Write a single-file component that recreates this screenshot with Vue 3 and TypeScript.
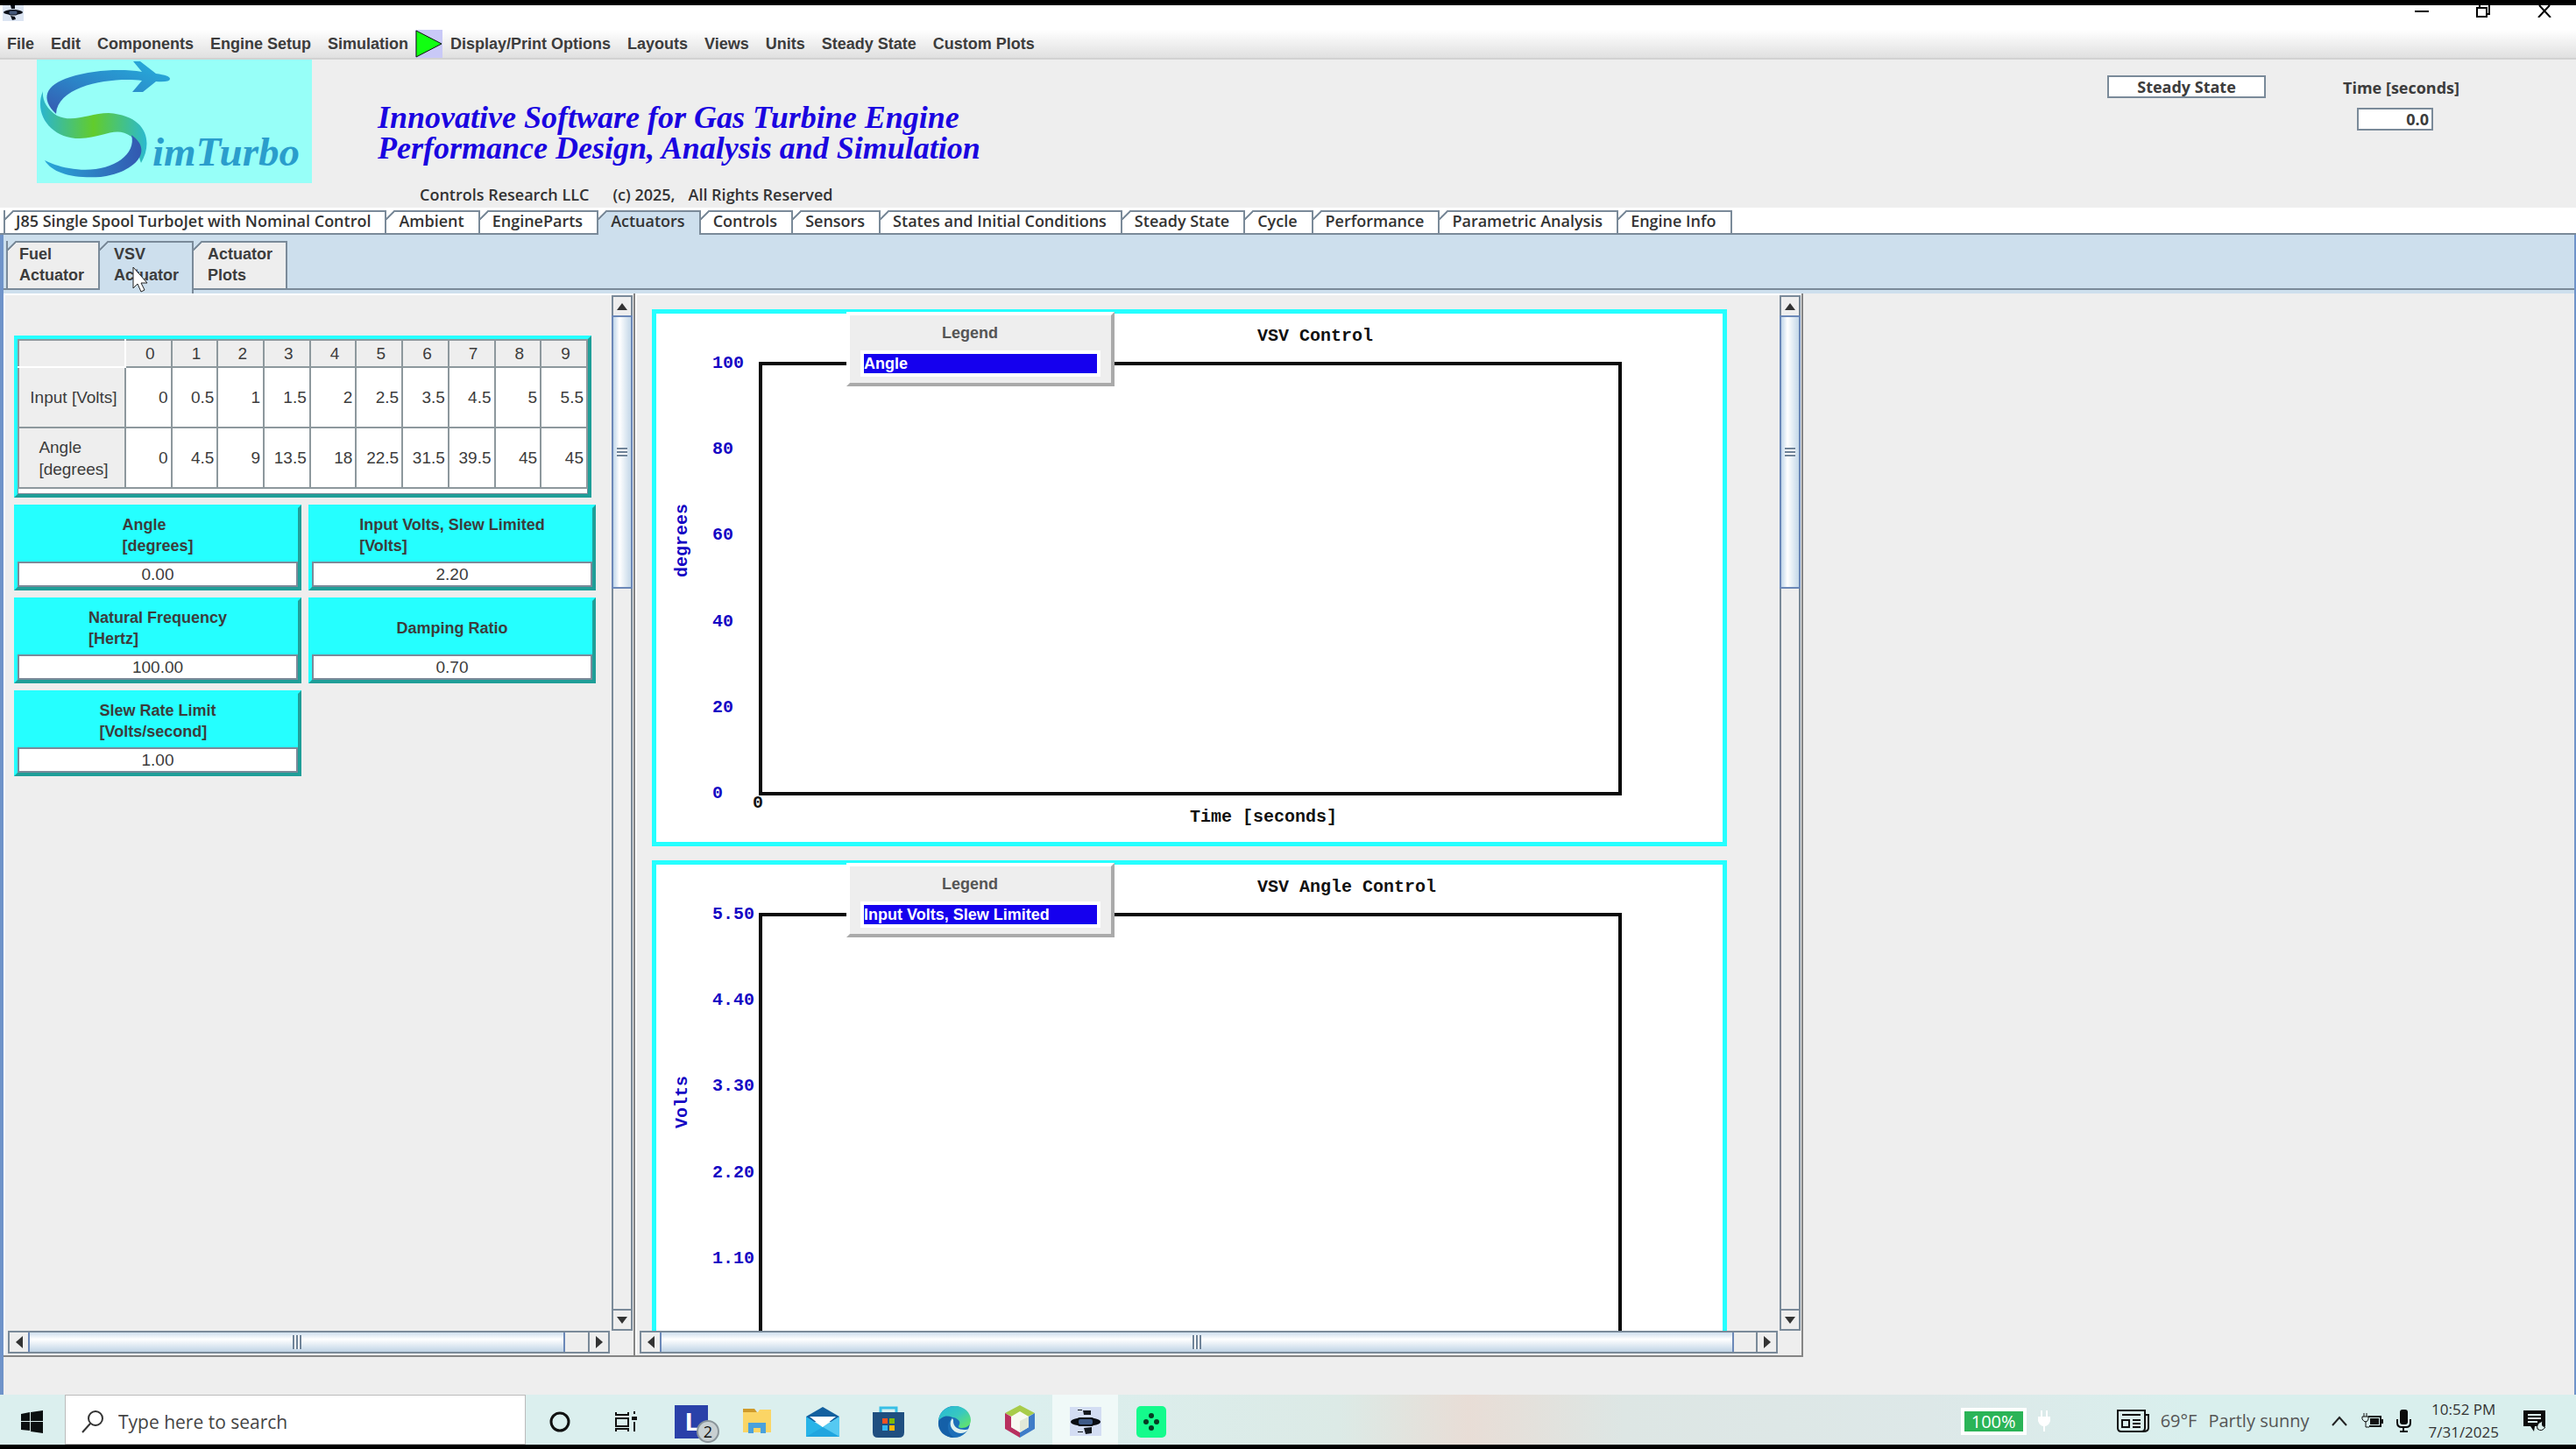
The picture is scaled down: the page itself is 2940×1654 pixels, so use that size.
<script setup lang="ts">
import { ref } from 'vue'

interface Series { title: string; legend: string; axis: string; ticks: string[]; origin?: string; xlabel?: string }
interface Field { name: string; unit: string; value: string }

const menusLeft = ['File', 'Edit', 'Components', 'Engine Setup', 'Simulation']
const menusRight = ['Display/Print Options', 'Layouts', 'Views', 'Units', 'Steady State', 'Custom Plots']

const tabs = [
  'J85 Single Spool TurboJet with Nominal Control', 'Ambient', 'EngineParts', 'Actuators',
  'Controls', 'Sensors', 'States and Initial Conditions', 'Steady State', 'Cycle',
  'Performance', 'Parametric Analysis', 'Engine Info',
]
const activeTab = ref('Actuators')

const subTabs = [['Fuel', 'Actuator'], ['VSV', 'Actuator'], ['Actuator', 'Plots']]
const activeSub = ref(1)

const inputRow = ['0', '0.5', '1', '1.5', '2', '2.5', '3.5', '4.5', '5', '5.5']
const angleRow = ['0', '4.5', '9', '13.5', '18', '22.5', '31.5', '39.5', '45', '45']

const fields = ref<Field[]>([
  { name: 'Angle', unit: '[degrees]', value: '0.00' },
  { name: 'Input Volts, Slew Limited', unit: '[Volts]', value: '2.20' },
  { name: 'Natural Frequency', unit: '[Hertz]', value: '100.00' },
  { name: 'Damping Ratio', unit: '', value: '0.70' },
  { name: 'Slew Rate Limit', unit: '[Volts/second]', value: '1.00' },
])

const charts: Series[] = [
  { title: 'VSV Control', legend: 'Angle', axis: 'degrees', ticks: ['100', '80', '60', '40', '20', '0'], origin: '0', xlabel: 'Time [seconds]' },
  { title: 'VSV Angle Control', legend: 'Input Volts, Slew Limited', axis: 'Volts', ticks: ['5.50', '4.40', '3.30', '2.20', '1.10', ''] },
]

const mode = ref('Steady State')
const time = ref('0.0')
const query = ref('')
</script>

<template>
  <div class="screen">
    <header class="titlebar">
      <svg class="app-icon" width="24" height="18" viewBox="0 0 24 18" aria-hidden="true">
        <rect width="24" height="18" fill="#dbe4f2" />
        <ellipse cx="12" cy="8" rx="11" ry="3" fill="#0b0f18" />
        <rect x="7" y="6" width="10" height="5" rx="2" fill="#46597a" stroke="#0b0f18" />
        <path d="M9 0h5v4h-4zM9 12l5 1 1 3-4 1z" fill="#0b0f18" />
      </svg>
      <div class="window-buttons">
        <button aria-label="Minimize"><svg width="16" height="14"><path d="M0 7h16" stroke="#000" stroke-width="2" /></svg></button>
        <button aria-label="Restore"><svg width="16" height="14"><path d="M1 3h11v10H1zM4 3V0M15 0v10h-3" fill="none" stroke="#000" stroke-width="2" /></svg></button>
        <button aria-label="Close"><svg width="16" height="14"><path d="M2 0l13 14M14 0L1 14" stroke="#000" stroke-width="2" /></svg></button>
      </div>
    </header>

    <nav class="menubar">
      <button v-for="m in menusLeft" :key="m">{{ m }}</button>
      <button class="play" aria-label="Run">
        <svg width="31" height="32" viewBox="0 0 31 32"><rect width="31" height="32" fill="#c9c9f7" /><path d="M1 1v30l29-15z" fill="#1f1" stroke="#111" stroke-width="1" /></svg>
      </button>
      <button v-for="m in menusRight" :key="m">{{ m }}</button>
    </nav>

    <section class="banner">
      <svg class="logo" width="314" height="141" viewBox="0 0 314 141" role="img" aria-label="SimTurbo">
        <defs>
          <linearGradient id="top" x1="1" y1="0" x2="0" y2="1"><stop offset="0" stop-color="#25b0dc" /><stop offset=".6" stop-color="#2c82c6" /><stop offset="1" stop-color="#3658b0" /></linearGradient>
          <linearGradient id="mid" x1="0" y1="0" x2="1" y2="0"><stop offset="0" stop-color="#2bb5cf" /><stop offset=".5" stop-color="#62cc2c" /><stop offset="1" stop-color="#2bb9cf" /></linearGradient>
          <linearGradient id="low" x1="0" y1="0" x2="1" y2="0"><stop offset="0" stop-color="#28a8d8" /><stop offset="1" stop-color="#3358b0" /></linearGradient>
        </defs>
        <rect width="314" height="141" fill="#97fff8" />
        <path d="M22 62C4 45 9 29 38 20C64 12 96 10 120 14L110 2H118L136 16Q152 18 152 22Q152 26 136 25L121 37H109L120 24C88 20 24 28 22 62Z" fill="url(#top)" />
        <path d="M7 36C-4 62 16 90 49 90C78 89 90 75 108 88C116 96 116 112 119 118C133 94 126 64 82 61C60 61 42 73 23 64C11 56 6 46 7 36Z" fill="url(#mid)" />
        <path d="M108 86C115 112 78 132 37 124C24 122 16 118 9 115C18 130 42 136 73 134C108 130 136 106 108 86Z" fill="url(#low)" />
        <text x="132" y="121" class="logo-text">imTurbo</text>
      </svg>
      <div class="tagline">
        <p class="slogan">Innovative Software for Gas Turbine Engine<br>Performance Design, Analysis and Simulation</p>
        <p class="copyright"><span>Controls Research LLC</span><span>(c) 2025,</span><span>All Rights Reserved</span></p>
      </div>
      <div class="status">
        <input v-model="mode" class="sunken mode" aria-label="Mode">
        <div class="clock">
          <label for="time">Time [seconds]</label>
          <input id="time" v-model="time" class="sunken time">
        </div>
      </div>
    </section>

    <div class="tabs" role="tablist">
      <button
        v-for="t in tabs" :key="t" role="tab" class="tab" :class="{ active: t === activeTab }"
        :aria-selected="t === activeTab" @click="activeTab = t"
      >{{ t }}</button>
    </div>

    <main class="workspace">
      <div class="subtabs" role="tablist">
        <button
          v-for="(s, i) in subTabs" :key="i" role="tab" class="subtab" :class="{ active: i === activeSub }"
          :aria-selected="i === activeSub" @click="activeSub = i"
        >
          {{ s[0] }}<br>{{ s[1] }}
          <svg v-if="i === 1" class="pointer" width="18" height="30" viewBox="0 0 18 30" aria-hidden="true">
            <path d="M1 1v24l5-5 4 9 4-2-4-8h7z" fill="#fff" stroke="#222" stroke-width="1" />
          </svg>
        </button>
      </div>

      <div class="panes">
        <section class="pane pane-left">
          <div class="view inputs">
            <div class="table-frame">
              <table>
                <thead>
                  <tr><td class="corner" /><th v-for="n in 10" :key="n" scope="col">{{ n - 1 }}</th></tr>
                </thead>
                <tbody>
                  <tr><th scope="row"><span>Input [Volts]</span></th><td v-for="(v, i) in inputRow" :key="i">{{ v }}</td></tr>
                  <tr><th scope="row"><span>Angle<br>[degrees]</span></th><td v-for="(v, i) in angleRow" :key="i">{{ v }}</td></tr>
                </tbody>
              </table>
            </div>
            <div class="cards">
              <div v-for="(f, i) in fields" :key="f.name" class="card">
                <label :for="'field' + i"><span>{{ f.name }}<template v-if="f.unit"><br>{{ f.unit }}</template></span></label>
                <input :id="'field' + i" v-model="f.value" class="sunken">
              </div>
            </div>
          </div>
          <div class="vbar">
            <button aria-label="Scroll up"><svg width="12" height="8"><path d="M6 0l6 8H0z" /></svg></button>
            <div class="vtrack"><div class="vthumb"><i /></div></div>
            <button aria-label="Scroll down"><svg width="12" height="8"><path d="M6 8l6-8H0z" /></svg></button>
          </div>
          <div class="hbar">
            <button aria-label="Scroll left"><svg width="8" height="14"><path d="M0 7l8-7v14z" /></svg></button>
            <div class="htrack"><div class="hthumb"><i /></div></div>
            <button aria-label="Scroll right"><svg width="8" height="14"><path d="M8 7L0 0v14z" /></svg></button>
          </div>
        </section>

        <section class="pane pane-right">
          <div class="view plots">
            <figure v-for="c in charts" :key="c.title" class="chart">
              <figcaption>{{ c.title }}</figcaption>
              <div class="plot-row">
                <div class="axis-name"><span>{{ c.axis }}</span></div>
                <ol class="ticks"><li v-for="t in c.ticks" :key="t">{{ t }}</li></ol>
                <div class="frame" />
              </div>
              <div v-if="c.origin" class="origin">{{ c.origin }}</div>
              <div v-if="c.xlabel" class="xlabel">{{ c.xlabel }}</div>
              <div class="legend">
                <h2>Legend</h2>
                <div class="legend-list"><div>{{ c.legend }}</div></div>
              </div>
            </figure>
          </div>
          <div class="vbar">
            <button aria-label="Scroll up"><svg width="12" height="8"><path d="M6 0l6 8H0z" /></svg></button>
            <div class="vtrack"><div class="vthumb"><i /></div></div>
            <button aria-label="Scroll down"><svg width="12" height="8"><path d="M6 8l6-8H0z" /></svg></button>
          </div>
          <div class="hbar">
            <button aria-label="Scroll left"><svg width="8" height="14"><path d="M0 7l8-7v14z" /></svg></button>
            <div class="htrack"><div class="hthumb"><i /></div></div>
            <button aria-label="Scroll right"><svg width="8" height="14"><path d="M8 7L0 0v14z" /></svg></button>
          </div>
        </section>
      </div>
    </main>

    <footer class="taskbar">
      <button class="start" aria-label="Start">
        <svg width="25" height="26" viewBox="0 0 25 26"><path d="M0 4l10-2v10H0zM11 2l14-2v12H11zM0 13h10v10L0 22zM11 13h14v13l-14-2z" fill="#0b0f10" /></svg>
      </button>
      <label class="search">
        <svg width="26" height="26" viewBox="0 0 26 26"><circle cx="16" cy="9" r="8" fill="none" stroke="#333" stroke-width="2" /><path d="M10 15L1 25" stroke="#333" stroke-width="2" /></svg>
        <input v-model="query" placeholder="Type here to search" aria-label="Type here to search">
      </label>
      <div class="apps">
        <button aria-label="Cortana"><svg width="26" height="26"><circle cx="13" cy="13" r="10" fill="none" stroke="#111" stroke-width="3" /></svg></button>
        <button aria-label="Task view">
          <svg width="26" height="26" viewBox="0 0 26 26"><path d="M2 2v3h14V2M2 9h14v9H2zM2 24v-3h14v3M23 1v3M23 13v11" fill="none" stroke="#111" stroke-width="2" /><rect x="20" y="7" width="6" height="4" fill="#111" /></svg>
        </button>
        <button aria-label="L, 2 notifications" class="lapp">
          <svg width="38" height="38"><rect width="38" height="38" fill="#2a41a9" /></svg><b>L</b><span>2</span>
        </button>
        <button aria-label="File Explorer">
          <svg width="32" height="30" viewBox="0 0 32 30"><path d="M0 0h13l3 4H0z" fill="#cf9b2b" /><path d="M0 4h17l2-3h13v26H0z" fill="#fbd565" /><path d="M6 16h20v12h-6v-6h-8v6H6z" fill="#4aa1dc" /></svg>
        </button>
        <button aria-label="Mail">
          <svg width="38" height="36" viewBox="0 0 38 36"><path d="M0 12L19 1l19 11v6H0z" fill="#14609f" /><path d="M0 12l19 12L38 12v23H0z" fill="#28b4e8" /><path d="M4 12h30L19 24z" fill="#fff" /><path d="M19 24L38 12v23z" fill="#55c9f2" /><path d="M19 24L38 35H0z" fill="#1b9bd8" opacity=".6" /></svg>
        </button>
        <button aria-label="Microsoft Store">
          <svg width="36" height="36" viewBox="0 0 36 36"><path d="M9 8V2h18v6" fill="none" stroke="#38bfe6" stroke-width="3" /><path d="M0 7h36v23q0 6-6 6H6q-6 0-6-6z" fill="#1f4f80" /><path d="M11 14h6v6h-6z" fill="#f25022" /><path d="M19 14h6v6h-6z" fill="#7fba00" /><path d="M11 22h6v6h-6z" fill="#33b6f2" /><path d="M19 22h6v6h-6z" fill="#ffb900" /></svg>
        </button>
        <button aria-label="Edge">
          <svg width="38" height="38" viewBox="0 0 38 38"><defs><linearGradient id="edge" x1="0" y1="0" x2="1" y2="1"><stop offset="0" stop-color="#25b8d8" /><stop offset=".5" stop-color="#38c8c0" /><stop offset="1" stop-color="#6be85a" /></linearGradient></defs><circle cx="19" cy="19" r="18" fill="#1c6fb8" /><path d="M1 17C3 6 11 1 20 1c11 0 18 8 18 16 0 6-5 9-10 9-4 0-5-1-3-4 3-8-14-12-24-5z" fill="url(#edge)" /><path d="M17 15c-5 5-2 16 9 17 4 0 8-2 10-5-4 2-19 2-18-10z" fill="#def0ef" /><path d="M1 19C0 30 9 37 19 37 11 32 9 21 17 14 10 11 4 13 1 19z" fill="#1560a8" /></svg>
        </button>
        <button aria-label="NetBeans">
          <svg width="34" height="37" viewBox="0 0 34 37"><path d="M17 0l17 9-8 4-9-5-9 5-8-4z" fill="#a8cc4a" /><path d="M0 9l7 4v12l10 6v6L0 27z" fill="#b8305f" /><path d="M34 9l-7 4v12l-10 6v6l17-10z" fill="#3f7cc8" /><path d="M7 13l10-6 10 6v12l-10 6-10-6z" fill="#f7faf2" /><path d="M17 18v13l10-6V13z" fill="#e0e8d8" /></svg>
        </button>
        <button aria-label="SimTurbo" class="current">
          <svg width="36" height="33" viewBox="0 0 36 33"><rect width="36" height="33" fill="#d3ddf3" /><ellipse cx="18" cy="17" rx="17" ry="5" fill="#090c12" /><rect x="9" y="13" width="18" height="8" rx="3" fill="#3f5b88" stroke="#090c12" stroke-width="2" /><path d="M15 4h9v5h-8zM16 24l9-1v7l-7 1zM9 3h5v1H9zM9 28h6v1H9z" fill="#15191f" /></svg>
        </button>
        <button aria-label="Dice">
          <svg width="34" height="36" viewBox="0 0 34 36"><rect width="34" height="36" rx="5" fill="#14fb8c" /><g fill="#063b22"><circle cx="17" cy="11" r="3" /><circle cx="11" cy="18" r="3" /><circle cx="23" cy="18" r="3" /><circle cx="17" cy="25" r="3" /></g></svg>
        </button>
      </div>
      <div class="tray">
        <div class="battery">100%</div>
        <svg class="plug" width="16" height="26" viewBox="0 0 16 26"><path d="M5 1v7M11 1v7M8 17v8" stroke="#fff" stroke-width="2" /><path d="M1 8h14v5q-2 6-7 6t-7-6z" fill="#fff" /></svg>
        <button class="weather">
          <svg width="37" height="26" viewBox="0 0 37 26"><path d="M1 1h31v20q0 4-4 4H5q-4 0-4-4zM32 6h4v15q0 4-6 4M6 6h21M18 12h9M18 16h9M18 20h9" fill="none" stroke="#111" stroke-width="2" /><rect x="6" y="12" width="8" height="8" fill="none" stroke="#111" stroke-width="2" /></svg>
          <span>69°F</span><span>Partly sunny</span>
        </button>
        <svg class="chevron" width="18" height="12"><path d="M1 11l8-9 8 9" fill="none" stroke="#222" stroke-width="2" /></svg>
        <svg width="25" height="18" viewBox="0 0 25 18"><path d="M8 4h14v11H9M24 7v5" fill="none" stroke="#111" stroke-width="2" /><rect x="10" y="6" width="10" height="7" fill="#111" /><path d="M1 4h7v3q-1 3-3 3t-4-3zM3 0v4M6 0v4M5 9v7h4" stroke="#111" fill="#dcefed" /></svg>
        <svg class="mic" width="17" height="26" viewBox="0 0 17 26"><rect x="4" y="0" width="9" height="17" rx="3" fill="#0b0b0b" /><path d="M1 11v4q0 5 5 5h5q5 0 5-5v-4M8 20v4M4 25h9" fill="none" stroke="#0b0b0b" stroke-width="2" /></svg>
        <div class="date"><span>10:52 PM</span><span>7/31/2025</span></div>
        <button aria-label="Notifications">
          <svg width="25" height="26" viewBox="0 0 25 26"><path d="M0 1h25v18H13l-1 6-4-6H0z" fill="#0b0b0b" /><path d="M5 6h15M5 10h15M5 14h11" stroke="#dcefed" stroke-width="2" /><path d="M22 13q-8 3-6 9 5 4 9-2-5 0-3-7z" fill="#dcefed" stroke="#0b0b0b" /></svg>
        </button>
      </div>
    </footer>
  </div>
</template>

<style>
body { margin: 0; background: #000; }
</style>

<style scoped>
.screen {
  --line: #7a8a99;
  --tab-blue: #cddfed;
  box-sizing: border-box;
  display: flex;
  flex-direction: column;
  height: 100vh;
  border-top: 6px solid #000;
  border-bottom: 5px solid #000;
  background: #eee;
  color: #3c3c3c;
  font: bold 18px/24px "Liberation Sans", Arial, sans-serif;
  overflow: hidden;
}
.screen *, .screen *::before { box-sizing: border-box; }
button {
  padding: 0;
  border: 0;
  background: none;
  color: inherit;
  font: inherit;
}
input { min-width: 0; color: inherit; font: inherit; border-radius: 0; }
svg { display: block; flex: none; }
p, h2, figure, ol { margin: 0; padding: 0; }

.titlebar { display: flex; justify-content: space-between; height: 28px; flex: none; padding: 0 28px 0 3px; background: #fff; }
.window-buttons { display: flex; gap: 54px; align-items: flex-start; }

.menubar {
  display: flex;
  gap: 19px;
  align-items: center;
  height: 34px;
  flex: none;
  padding: 0 8px;
  border-bottom: 2px solid #d2d2d2;
  background: linear-gradient(#fff, #e0e0e0);
  white-space: nowrap;
}
.play { margin: 0 -10px 0 -11px; }

.banner { display: flex; height: 169px; flex: none; padding-left: 42px; }
.logo-text { font: italic bold 47px "Liberation Serif", serif; fill: #2a9dcc; }
.tagline { padding: 49px 0 0 75px; white-space: nowrap; }
.slogan { font: italic bold 36px/35px "Liberation Serif", serif; color: #1a05e0; }
.copyright { display: flex; gap: 15px; padding: 23px 0 0 48px; font: 600 18px/24px "Open Sans", sans-serif; color: #333; }
.copyright span:first-child { margin-right: 12px; }
.status { display: flex; gap: 88px; margin-left: auto; padding: 18px 133px 0 0; font: 700 18px/28px "Open Sans", sans-serif; }
.sunken {
  padding: 0 3px;
  border: 2px solid var(--line);
  background: #fff;
  text-align: center;
}
.mode { width: 181px; height: 26px; }
.clock { display: flex; flex-direction: column; align-items: center; gap: 9px; }
.time { width: 87px; height: 26px; margin-right: 14px; text-align: right; }

.tabs {
  display: flex;
  height: 31px;
  flex: none;
  padding: 3px 0 0 4px;
  border-bottom: 2px solid var(--line);
  background: #fff;
  color: #333;
  font: 600 18px/24px "Open Sans", sans-serif;
}
.tab, .subtab {
  --cut: #fff;
  position: relative;
  border-right: 2px solid var(--line);
  background:
    linear-gradient(135deg, var(--cut) 42%, var(--line) 43% 53%, transparent 54%) 0 0 / 9px 12px no-repeat,
    linear-gradient(var(--line), var(--line)) 0 0 / 100% 2px no-repeat,
    #fff;
  white-space: nowrap;
}
.tab { padding: 0 16px 3px 14px; }
.tab:first-child, .subtab:first-child { border-left: 2px solid var(--line); }
.tab:first-child { padding-left: 12px; }
.tab.active { margin-bottom: -2px; padding-bottom: 5px; background-color: var(--tab-blue); }

.workspace {
  display: flex;
  flex-direction: column;
  flex: 1;
  min-height: 0;
  border: solid #6f93c9;
  border-width: 0 2px 0 4px;
}
.subtabs {
  display: flex;
  height: 67px;
  flex: none;
  padding: 7px 0 5px 3px;
  background: linear-gradient(var(--line), var(--line)) 0 61px / 100% 2px no-repeat, var(--tab-blue);
}
.subtab {
  --cut: var(--tab-blue);
  width: 107px;
  height: 54px;
  padding: 0 0 1px 16px;
  background-color: #eee;
  text-align: left;
}
.subtab:first-child { padding-left: 13px; }
.subtab.active { height: 60px; padding-bottom: 7px; background-color: var(--tab-blue); }
.pointer { position: absolute; left: 37px; top: 29px; }

.panes {
  display: grid;
  grid-template-columns: 721fr 1333fr 880fr;
  flex: 1;
  min-height: 0;
  padding-bottom: 43px;
}
.pane {
  display: grid;
  grid-template: minmax(0, 1fr) 27px / minmax(0, 1fr) 24px;
  padding: 2px 1px 1px 5px;
  border: solid #858585;
  border-width: 0 2px 2px 0;
  box-shadow: inset 0 2px #fff, inset 2px 0 #fff;
  min-height: 0;
}
.view { overflow: hidden; min-height: 0; }

.vbar { display: flex; flex-direction: column; width: 24px; border: 2px solid var(--line); }
.hbar { display: flex; height: 26px; margin-right: 2px; border: 2px solid var(--line); }
.vbar button { display: grid; place-items: center; height: 21px; flex: none; }
.hbar button { display: grid; place-items: center; width: 21px; flex: none; }
.vbar path, .hbar path { fill: #333; }
.vtrack { flex: 1; border: solid var(--line); border-width: 0 0 2px; }
.htrack { flex: 1; border-right: 2px solid var(--line); }
.vthumb, .hthumb { display: grid; place-items: center; }
.vthumb { height: 27.5%; margin: 0 -2px; border: 2px solid #6b88b8; background: linear-gradient(90deg, #c0d6ea, #fff 35%, #c3d7e8); }
.hthumb { width: 96%; height: 100%; border: solid #6b88b8; border-width: 0 2px; background: linear-gradient(#cfdfee, #fff 35%, #c0d4e6); }
.pane-right .hthumb { width: 98%; }
.vthumb i { width: 12px; height: 10px; background: repeating-linear-gradient(#6f8398 0 2px, #fff 2px 4px); }
.hthumb i { width: 10px; height: 16px; background: repeating-linear-gradient(90deg, #6f8398 0 2px, #fff 2px 4px); }

.inputs { padding: 46px 0 0 7px; }
.table-frame {
  width: 659px;
  padding-bottom: 6px;
  border: 4px solid;
  border-color: #25ffff #1f9e98 #1f9e98 #25ffff;
  background: #fff;
  box-shadow: inset 0 0 0 1px var(--line);
}
table { width: 100%; border-collapse: collapse; table-layout: fixed; font: 19px/25px "Liberation Sans", Arial, sans-serif; }
th, td { border: 2px solid #8d989d; padding: 0; }
th { background: #eee; font-weight: normal; }
td { height: 69px; padding-right: 3px; background: #fff; text-align: right; }
thead th { height: 31px; padding-left: 4px; }
tbody th { padding-left: 4px; }
.corner { width: 122px; height: 31px; border-right-color: #fff; border-bottom-color: #fff; background: #eee; }
tbody th span { display: inline-block; text-align: left; }

.cards { display: grid; grid-template-columns: 328px 328px; gap: 8px; padding-top: 8px; }
.card {
  display: flex;
  flex-direction: column;
  height: 98px;
  border: 4px solid;
  border-color: #25ffff #1f9e98 #1f9e98 #25ffff;
  background: #25ffff;
}
.card label { display: grid; place-items: center; flex: 1; line-height: 24px; }
.card input { height: 29px; font: 19px/24px "Liberation Sans", Arial, sans-serif; }

.plots { padding: 16px 60px 0 14px; }
.chart {
  position: relative;
  height: 613px;
  margin-bottom: 16px;
  border: 5px solid #25ffff;
  background: #fff;
  color: #111;
  font: bold 20px/24px "Liberation Mono", monospace;
}
figcaption { padding: 14px 0 0 686px; height: 45px; }
.plot-row { display: flex; height: 515px; }
.axis-name { display: grid; align-items: end; justify-items: center; width: 50px; height: 256px; padding-left: 10px; color: #1405c4; }
.axis-name span { writing-mode: vertical-rl; transform: rotate(180deg); }
.ticks { display: flex; flex-direction: column; justify-content: space-between; width: 67px; padding-left: 14px; list-style: none; color: #1405c4; }
.ticks li { height: 24px; }
.frame { flex: 1; margin: 10px 115px 10px 0; border: 4px solid #0a0a0a; }
.origin { height: 24px; margin-top: -13px; padding-left: 110px; }
.xlabel { margin-top: -8px; padding-left: 609px; }
.legend {
  position: absolute;
  left: 217px;
  top: -2px;
  width: 306px;
  height: 85px;
  padding: 8px 12px;
  border: 4px solid;
  border-color: #fff #aaa #aaa #fff;
  background: #eee;
  color: #555;
  font: bold 18px/24px "Liberation Sans", Arial, sans-serif;
}
.legend h2 { font: inherit; text-align: center; padding-right: 24px; }
.legend-list { margin-top: 8px; padding: 4px 0; border: solid #fff; border-width: 0 4px; background: #fff; }
.legend-list div { background: #1500ee; color: #fff; line-height: 22px; }

.taskbar {
  display: flex;
  align-items: center;
  height: 57px;
  flex: none;
  background: linear-gradient(90deg, #dbefee 0 40%, #dceae6 52%, #e8ddd6 57%, #dde6e4 63%, #dde8e8 75%, #d9efed 85%);
  color: #333;
  font: 20px/26px "Open Sans", sans-serif;
}
.start { width: 74px; padding: 4px 0 0 24px; }
.search { display: flex; align-items: center; gap: 16px; align-self: stretch; width: 526px; padding: 4px 0 0 18px; border: 1px solid #bbb; background: #fff; }
.search input { flex: 1; padding: 0; border: 0; background: none; font-size: 21px; outline: 0; }
.search input::placeholder { color: #444; opacity: 1; }
.apps { display: flex; align-self: stretch; padding-left: 1px; }
.apps button { position: relative; display: grid; place-items: center; width: 75px; padding-top: 4px; }
.apps .current { background: #f0f9f8; }
.lapp b { position: absolute; left: 31px; top: 16px; color: #fff; font: bold 30px/30px "Liberation Sans", sans-serif; }
.lapp span { position: absolute; left: 44px; top: 29px; width: 26px; height: 26px; border: 2px solid #8a959a; border-radius: 13px; background: #c8d0d2; color: #111; font-size: 18px; line-height: 22px; }
.tray { display: flex; align-items: center; margin-left: auto; padding: 3px 35px 0 0; }
.battery { width: 75px; height: 31px; border: 4px solid #fff; background: #2bb457; color: #fff; line-height: 23px; text-align: center; }
.plug { margin: 0 75px 0 12px; }
.weather { display: flex; align-items: center; gap: 13px; color: #555; }
.chevron { margin: 0 16px 0 26px; }
.mic { margin: 0 19px 0 15px; }
.date { display: flex; flex-direction: column; align-items: center; margin-right: 28px; font-size: 17px; }
</style>
